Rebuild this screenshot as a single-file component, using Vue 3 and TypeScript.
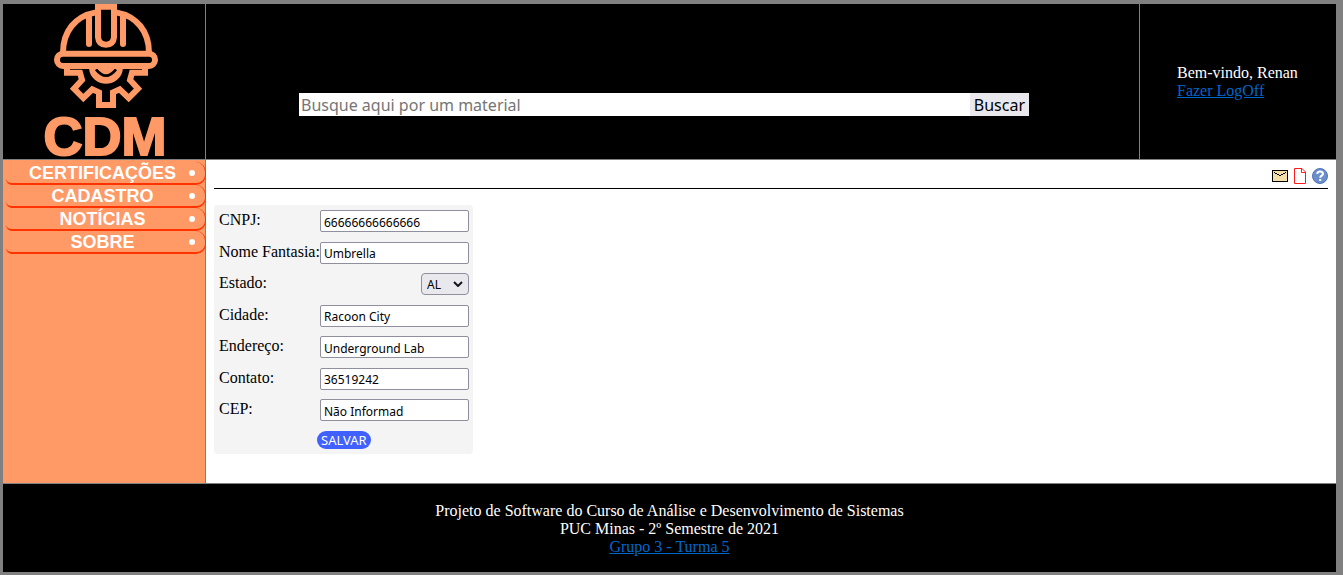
<script setup lang="ts">
import { reactive, ref } from 'vue'

interface TextField {
  id: string
  label: string
  value: string
  options?: string[]
}

const menu: string[] = ['CERTIFICAÇÕES', 'CADASTRO', 'NOTÍCIAS', 'SOBRE']

const search = ref('')

const fields = reactive<TextField[]>([
  { id: 'cnpj', label: 'CNPJ:', value: '66666666666666' },
  { id: 'nome', label: 'Nome Fantasia:', value: 'Umbrella' },
  { id: 'estado', label: 'Estado:', value: 'AL', options: ['AC', 'AL', 'AM', 'BA', 'MG', 'RJ', 'SP'] },
  { id: 'cidade', label: 'Cidade:', value: 'Racoon City' },
  { id: 'endereco', label: 'Endereço:', value: 'Underground Lab' },
  { id: 'contato', label: 'Contato:', value: '36519242' },
  { id: 'cep', label: 'CEP:', value: 'Não Informad' },
])
</script>

<template>
  <div class="page">
    <header class="header">
      <div class="logo">
        <svg class="helmet" viewBox="156 12 318 315" fill="none" stroke="#ff9966" stroke-width="18" aria-hidden="true">
          <path d="M189 158C189 95 225 48 288 37M447 158C447 95 411 48 348 37" />
          <path d="M267 50V132M369 50V132" stroke-linecap="round" />
          <path d="M294 20V112Q296 134 318 134Q340 134 342 112V20Z" />
          <path d="M201 205V218H240L246 240L222 266L250 294L277 268L297 277V315H339V277L359 268L386 294L414 266L390 240L396 218H435V205" />
          <path d="M276 203C280 255 356 255 360 203Z" fill="#ff9966" />
          <path d="M288 208Q318 246 348 208" stroke="#000" stroke-width="8" />
          <rect x="171" y="161" width="294" height="37" rx="18" fill="#000" />
        </svg>
        <span class="brand">CDM</span>
      </div>
      <form class="search" role="search" @submit.prevent>
        <input v-model="search" class="search-box" type="text" aria-label="Busca" placeholder="Busque aqui por um material" />
        <button class="search-button" type="submit">Buscar</button>
      </form>
      <div class="user">
        <span>Bem-vindo, Renan</span>
        <a href="#">Fazer LogOff</a>
      </div>
    </header>

    <div class="middle">
      <nav class="menu">
        <a v-for="item in menu" :key="item" class="menu-item" href="#">
          <span class="menu-text">{{ item }}</span>
          <span class="dot"></span>
        </a>
      </nav>

      <main class="content">
        <div class="tools">
          <a href="#" aria-label="E-mail">
            <svg width="16" height="16" viewBox="0 0 16 16" shape-rendering="crispEdges">
              <path d="M0 2h16v12H0z" fill="#000" />
              <path d="M1 3h14v10H1z" fill="#f5dfa8" />
              <path d="M2 4h1v1h2v1h2v1h2v-1h2v-1h2v-1h1v1h-1v1h-2v1h-2v1h-2v-1h-2v-1h-2v-1h-1z" fill="#000" />
            </svg>
          </a>
          <a href="#" aria-label="Documento">
            <svg width="12" height="16" viewBox="0 0 12 16" fill="none" stroke="#ff1a1a">
              <path d="M0.5 0.5H8L11.5 4V15.5H0.5Z" />
              <path d="M7.5 0.5V4.5H11.5" />
            </svg>
          </a>
          <a href="#" aria-label="Ajuda">
            <svg width="16" height="16" viewBox="0 0 16 16" fill="none">
              <circle cx="8" cy="8" r="7.5" fill="#6a8fca" stroke="#4f74b6" />
              <path d="M5.3 6C5.3 2.8 11 2.8 11 5.8C11 7.8 8.2 7.6 8.2 9.8" stroke="#fff" stroke-width="2" />
              <path d="M7.2 11h2v2h-2z" fill="#fff" />
            </svg>
          </a>
        </div>

        <form class="card" @submit.prevent>
          <div class="fields">
            <div v-for="field in fields" :key="field.id" class="field">
              <label :for="field.id">{{ field.label }}</label>
              <span v-if="field.options" class="select-wrap">
                <select :id="field.id" v-model="field.value">
                  <option v-for="option in field.options" :key="option">{{ option }}</option>
                </select>
                <svg class="chevron" width="10" height="6" viewBox="0 0 10 6" fill="none" stroke="#15141a" stroke-width="2">
                  <path d="M1 1L5 5L9 1" />
                </svg>
              </span>
              <input v-else :id="field.id" v-model="field.value" type="text" />
            </div>
          </div>
          <button class="save" type="submit">SALVAR</button>
        </form>
      </main>
    </div>

    <footer class="footer">
      <span>Projeto de Software do Curso de Análise e Desenvolvimento de Sistemas</span>
      <span>PUC Minas - 2º Semestre de 2021</span>
      <a href="#">Grupo 3 - Turma 5</a>
    </footer>
  </div>
</template>

<style>
body {
  margin: 0;
  background: #808080;
}
</style>

<style scoped>
.page {
  box-sizing: border-box;
  min-height: 100vh;
  padding: 4px 7px 3px 3px;
  display: flex;
  flex-direction: column;
  background: #808080;
  font: 16px/18px "Liberation Serif", serif;
  color: #000;
}
.header,
.middle {
  display: grid;
  column-gap: 1px;
}
.header {
  grid-template-columns: 202px 1fr 196px;
  margin-bottom: 1px;
  color: #fff;
}
.header > * {
  background: #000;
}
.logo {
  box-sizing: border-box;
  display: flex;
  flex-direction: column;
  align-items: center;
  height: 155px;
  padding-left: 2px;
}
.helmet {
  flex: none;
  width: 106px;
  height: 105px;
}
.brand {
  flex: none;
  font: bold 54px/54px "Liberation Sans", Arial, sans-serif;
  color: #ff9966;
  -webkit-text-stroke: 2px #ff9966;
}
.search {
  display: flex;
  align-items: center;
  padding: 46px 110px 0 93px;
}
.search-box,
.search-button {
  box-sizing: border-box;
  height: 23px;
  margin: 0;
  border: 0;
  border-radius: 0;
  font: 16px/20px "Noto Sans", sans-serif;
}
.search-box {
  flex: 1;
  min-width: 0;
  padding: 0 2px;
  background: #fff;
}
.search-box::placeholder {
  color: #757575;
}
.search-button {
  padding: 0 4px;
  background: #e9e9ed;
  color: #000;
}
.user {
  display: flex;
  flex-direction: column;
  align-items: flex-start;
  justify-content: center;
  padding-left: 37px;
}
.user a,
.footer a {
  color: #0066cc;
}
.middle {
  flex: 1;
  grid-template-columns: 202px 1fr;
}
.menu {
  padding: 2px 0 0 3px;
  background: #ff9966;
}
.menu-item {
  box-sizing: border-box;
  display: flex;
  align-items: center;
  height: 23px;
  margin-right: -1px;
  padding-right: 10px;
  border-bottom: 2px solid #ff3300;
  border-right: 1px solid #ff3300;
  border-radius: 0 10px 10px 6px;
  border-top-right-radius: 10px;
  background: #ff9966;
  font: bold 18px/21px "Liberation Sans", Arial, sans-serif;
  color: #fff;
  text-decoration: none;
}
.menu-text {
  flex: 1;
  padding: 2px 0 0 10px;
  text-align: center;
}
.dot {
  width: 6px;
  height: 6px;
  border-radius: 50%;
  background: #fff;
}
.content {
  padding: 8px 8px 29px;
  background: #fff;
}
.tools {
  display: flex;
  justify-content: flex-end;
  gap: 6px;
  height: 20px;
  margin-bottom: 16px;
  border-bottom: 1px solid #000;
}
.tools svg {
  display: block;
}
.card {
  box-sizing: border-box;
  width: 259px;
  padding: 5px 4px 5px 5px;
  border-radius: 4px;
  background: #f4f4f4;
}
.fields {
  display: grid;
  grid-auto-rows: 1fr;
  min-height: 221px;
}
.field {
  display: flex;
  justify-content: space-between;
  align-items: flex-start;
}
.field label {
  line-height: 19px;
}
.field input,
.field select {
  box-sizing: border-box;
  height: 22px;
  margin: 0;
  border: 1px solid #8f8f9d;
  font: 12px/18px "Noto Sans", sans-serif;
  color: #000;
}
.field input {
  width: 149px;
  padding: 2px 3px 0;
  border-radius: 2px;
  background: #fff;
}
.select-wrap {
  position: relative;
}
.field select {
  display: block;
  width: 48px;
  padding: 2px 5px 0;
  appearance: none;
  border-radius: 4px;
  background: #e9e9ed;
}
.chevron {
  position: absolute;
  right: 6px;
  top: 8px;
  pointer-events: none;
}
.save {
  display: block;
  height: 18px;
  margin: 0 0 0 98px;
  padding: 0 4px;
  border: 0;
  border-radius: 9px;
  background: #4060ff;
  font: 13px/18px "Noto Sans", sans-serif;
  color: #fff;
}
.footer {
  display: flex;
  flex-direction: column;
  align-items: center;
  margin-top: 1px;
  padding: 18px 0 16px;
  background: #000;
  color: #fff;
}
</style>
